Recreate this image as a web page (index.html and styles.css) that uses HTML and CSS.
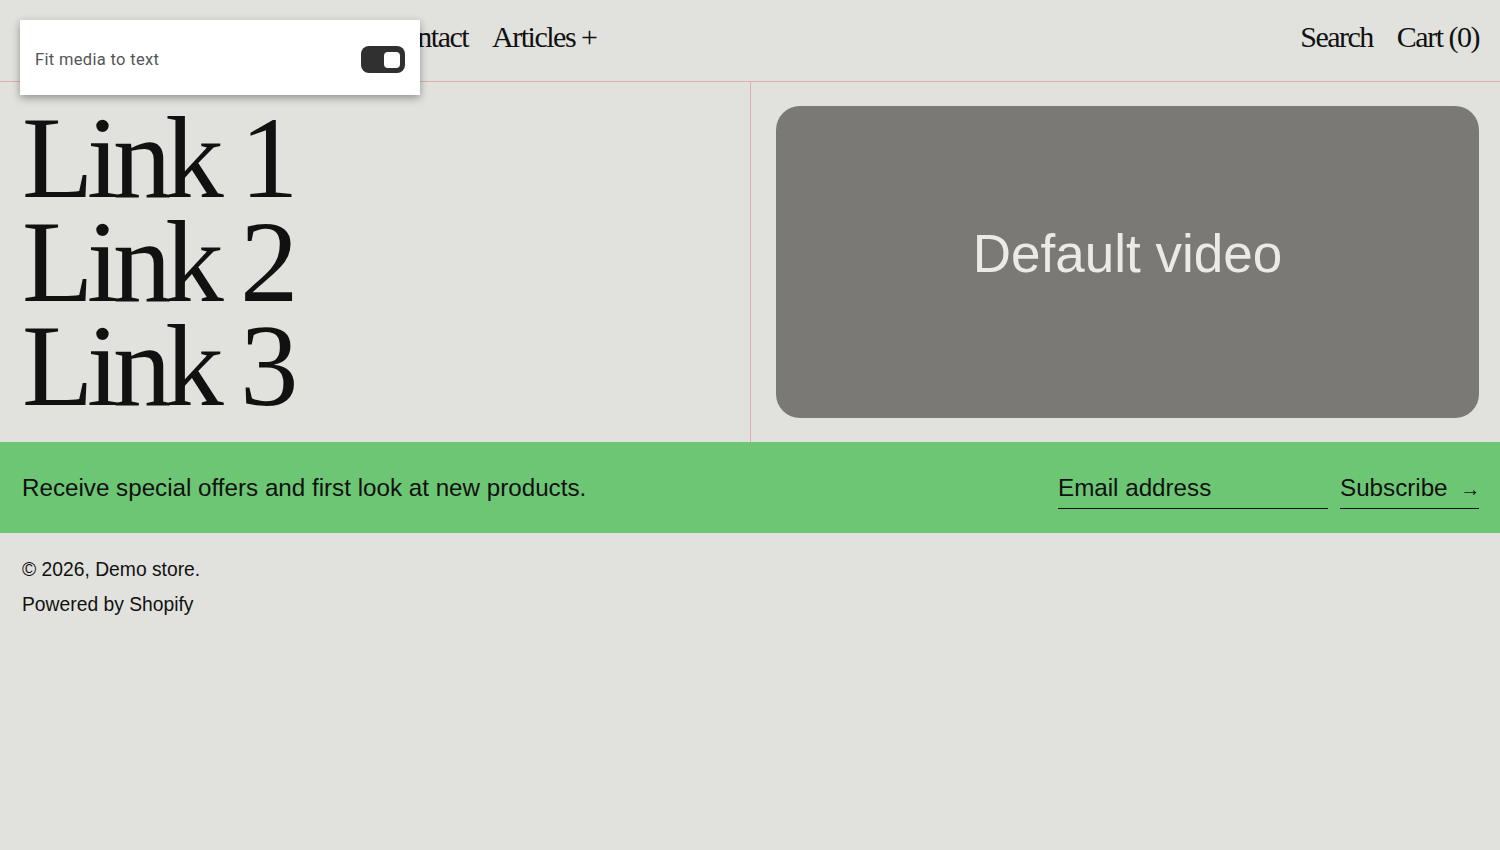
FILE: index.html
```html
<!DOCTYPE html>
<html lang="en">
<head>
  <meta charset="UTF-8" />
  <meta name="viewport" content="width=device-width, initial-scale=1" />
  <title>Demo store</title>
  <link rel="stylesheet" href="styles.css">
</head>
<body>
  <header class="site-header">
    <nav class="nav-main">
      <a href="#" class="logo">Demo store</a>
      <a href="#">Home</a>
      <a href="#">Catalog</a>
      <a href="#">Contact</a>
      <a href="#">Articles +</a>
    </nav>
    <nav class="nav-util">
      <a href="#">Search</a>
      <a href="#">Cart (0)</a>
    </nav>
  </header>

  <main class="split">
    <div class="split-text">
      <a href="#">Link 1</a>
      <a href="#">Link 2</a>
      <a href="#">Link 3</a>
    </div>
    <div class="split-media">
      <div class="video">Default video</div>
    </div>
  </main>

  <section class="newsletter">
    <p>Receive special offers and first look at new products.</p>
    <form class="newsletter-form">
      <input type="email" placeholder="Email address" />
      <button type="button">Subscribe <span class="arrow">&rarr;</span></button>
    </form>
  </section>

  <footer class="site-footer">
    <p>&copy; 2026, Demo store.</p>
    <p>Powered by Shopify</p>
  </footer>

  <!-- editor setting panel -->
  <div class="setting-panel">
    <span>Fit media to text</span>
    <span class="toggle"><span class="knob"></span></span>
  </div>
</body>
</html>
```

FILE: styles.css
```css
* { margin:0; padding:0; box-sizing:border-box }
html, body { width:100%; height:100% }
body {
  background:#e1e1dd;
  color:#111;
  font-family:"Liberation Sans", Arial, sans-serif;
  position:relative;
}
a { color:inherit; text-decoration:none }

/* HEADER */
.site-header {
  height:82px;
  display:flex; align-items:center; justify-content:space-between;
  padding:0 21px 8px 22px;
  border-bottom:1px solid #dfacac;
  font-family:"Liberation Serif", "Times New Roman", serif;
  font-size:30px; letter-spacing:-0.05em;
}
.nav-main, .nav-util { display:flex; gap:24px }
.nav-main .logo { margin-right:17px }

/* LINKS + VIDEO */
.split {
  display:grid; grid-template-columns:751px 1fr;
  height:360px;
}
.split-text {
  border-right:1px solid #dfacac;
  padding:24px 22px 0;
  display:flex; flex-direction:column;
  font-family:"Liberation Serif", "Times New Roman", serif;
  font-size:117px; line-height:104px; letter-spacing:-0.055em;
}
.split-media { padding:24px 21px 24px 25px }
.video {
  height:100%;
  background:#7a7975;
  border-radius:24px;
  display:flex; align-items:center; justify-content:center;
  color:#ebeae5; font-size:53px;
  padding-bottom:18px;
}

/* NEWSLETTER */
.newsletter {
  background:#6cc674;
  height:91px;
  display:flex; align-items:center; justify-content:space-between;
  padding:0 21px 0 22px;
  font-size:24.2px;
}
.newsletter-form { display:flex; gap:12px; align-items:center; margin-top:8px }
.newsletter-form input {
  width:270px;
  background:none; border:none; border-bottom:1px solid #111;
  font:inherit; color:#111;
  padding:0 0 6px;
  outline:none;
}
.newsletter-form input::placeholder { color:#111; opacity:1 }
.newsletter-form button {
  background:none; border:none; border-bottom:1px solid #111;
  font:inherit; color:#111; white-space:nowrap;
  padding:0 0 6px; width:139px; text-align:left;
}
.newsletter-form .arrow { font-size:20px; margin-left:6px }

/* FOOTER */
.site-footer { padding:19px 22px; font-size:19.3px; line-height:35px }

/* SETTING PANEL */
.setting-panel {
  position:absolute; top:20px; left:20px;
  width:400px; height:75px;
  background:#fff;
  box-shadow:0 3px 8px rgba(0,0,0,0.35);
  display:flex; align-items:center; justify-content:space-between;
  padding:4px 15px 0 15px;
  font-family:Roboto, "Noto Sans", sans-serif;
  font-size:16.5px; color:#555;
  letter-spacing:0.02em;
}
.toggle {
  width:44px; height:27px;
  background:#303030; border-radius:8px;
  display:flex; align-items:center; justify-content:flex-end;
  padding-right:5px;
}
.knob {
  width:16px; height:16px;
  background:#fff; border-radius:4px;
}
```
